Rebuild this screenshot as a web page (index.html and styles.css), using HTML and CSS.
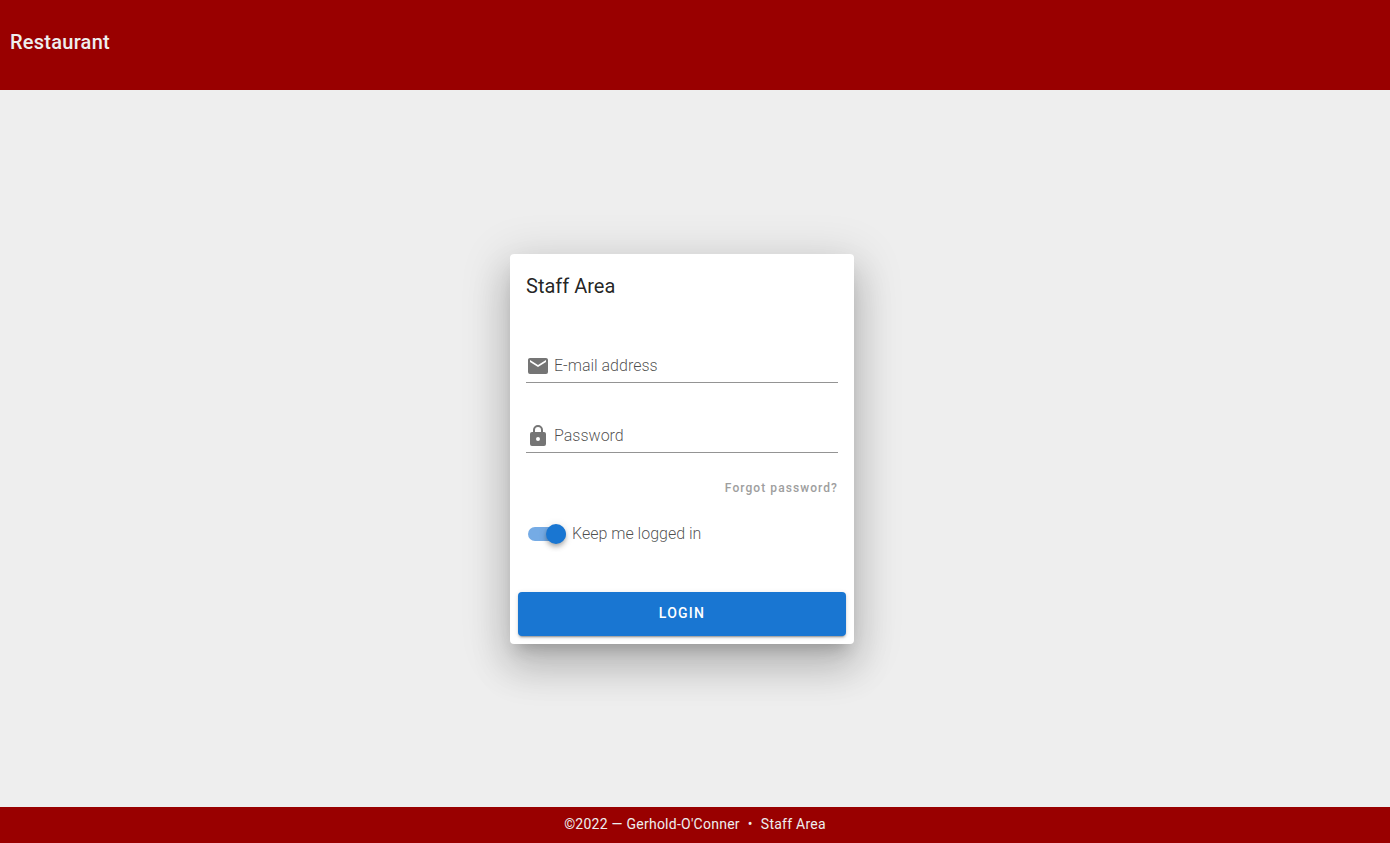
FILE: index.html
```html
<!DOCTYPE html>
<html lang="en">
<head>
  <meta charset="utf-8">
  <meta name="viewport" content="width=device-width, initial-scale=1">
  <title>Restaurant</title>
  <link rel="stylesheet" href="styles.css">
</head>
<body class="app">
  <header class="app-bar">
    <h1 class="brand">Restaurant</h1>
  </header>

  <main class="content">
    <form class="card">
      <h2 class="card-title">Staff Area</h2>

      <div class="card-body">
        <div class="field">
          <svg class="field-icon" viewBox="0 0 24 24" aria-hidden="true"><path d="M20 8l-8 5-8-5V6l8 5 8-5m0-2H4c-1.110 0-2 .890-2 2v12a2 2 0 0 0 2 2h16a2 2 0 0 0 2-2V6c0-1.110-.900-2-2-2z"/></svg>
          <div class="field-slot">
            <input class="field-input" id="email" type="email" placeholder=" ">
            <label class="field-label" for="email">E-mail address</label>
          </div>
        </div>

        <div class="field">
          <svg class="field-icon" viewBox="0 0 24 24" aria-hidden="true"><path d="M12 17a2 2 0 0 0 2-2 2 2 0 0 0-2-2 2 2 0 0 0-2 2 2 2 0 0 0 2 2m6-9a2 2 0 0 1 2 2v10a2 2 0 0 1-2 2H6a2 2 0 0 1-2-2V10a2 2 0 0 1 2-2h1V6a5 5 0 0 1 10 0v2h1m-6-5a3 3 0 0 0-3 3v2h6V6a3 3 0 0 0-3-3z"/></svg>
          <div class="field-slot">
            <input class="field-input" id="password" type="password" placeholder=" ">
            <label class="field-label" for="password">Password</label>
          </div>
        </div>

        <a class="forgot" href="#">Forgot password?</a>

        <label class="switch">
          <input class="switch-input" type="checkbox" role="switch" checked>
          <span>Keep me logged in</span>
        </label>
      </div>

      <button class="login" type="submit">Login</button>
    </form>
  </main>

  <footer class="footer">
    <span>©2022 — Gerhold-O'Conner</span>
    <span>•</span>
    <span>Staff Area</span>
  </footer>
</body>
</html>
```
FILE: styles.css
```css
* {
  box-sizing: border-box;
}

.app {
  display: flex;
  flex-direction: column;
  min-height: 100vh;
  margin: 0;
  background: #eee;
  color: rgba(0, 0, 0, 0.87);
  font: 400 16px/24px Roboto, sans-serif;
}

.app-bar {
  padding: 26px 10px 32px;
  background: #990000;
  color: #eee;
}

.brand {
  margin: 0;
  font-size: 20px;
  font-weight: 500;
  line-height: 32px;
  letter-spacing: 0.0125em;
}

.content {
  display: flex;
  flex: 1;
  align-items: center;
  justify-content: center;
  padding-right: 26px;
}

.card {
  width: 100%;
  max-width: 344px;
  border-radius: 4px;
  background: #fff;
  box-shadow: 0 11px 15px -7px rgba(0, 0, 0, 0.2), 0 24px 38px 3px rgba(0, 0, 0, 0.14), 0 9px 46px 8px rgba(0, 0, 0, 0.12);
}

.card-title {
  margin: 0;
  padding: 16px 16px 0;
  font-size: 20px;
  font-weight: 400;
  line-height: 32px;
}

.card-body {
  display: flex;
  flex-direction: column;
  padding: 48px 16px 0;
}

.field {
  display: flex;
  align-items: center;
  gap: 4px;
  height: 33px;
  margin-bottom: 37px;
  border-bottom: 1px solid #949494;
}

.field-icon {
  width: 24px;
  height: 24px;
  fill: #757575;
}

.field-slot {
  display: grid;
  flex: 1;
}

.field-input,
.field-label {
  grid-area: 1 / 1;
}

.field-input {
  width: 100%;
  height: 32px;
  padding: 0;
  border: 0;
  outline: 0;
  background: transparent;
  color: inherit;
  font: inherit;
}

.field-label {
  align-self: center;
  color: rgba(0, 0, 0, 0.7);
  font-weight: 300;
  pointer-events: none;
}

.field-input:focus + .field-label,
.field-input:not(:placeholder-shown) + .field-label {
  visibility: hidden;
}

.forgot {
  align-self: flex-end;
  margin-top: -10px;
  color: #9e9e9e;
  font-size: 12px;
  font-weight: 500;
  line-height: 16px;
  letter-spacing: 0.0892857143em;
  text-decoration: none;
}

.switch {
  display: flex;
  align-items: center;
  gap: 6px;
  margin-top: 26px;
  padding-left: 2px;
  color: rgba(0, 0, 0, 0.7);
  font-weight: 300;
}

.switch-input {
  display: flex;
  align-items: center;
  appearance: none;
  width: 38px;
  height: 14px;
  margin: 0;
  border-radius: 8px;
  background: #75abe5;
}

.switch-input::before {
  width: 20px;
  height: 20px;
  border-radius: 50%;
  background: #fff;
  box-shadow: 0 2px 4px -1px rgba(0, 0, 0, 0.2), 0 4px 5px 0 rgba(0, 0, 0, 0.14), 0 1px 10px 0 rgba(0, 0, 0, 0.12);
  content: "";
}

.switch-input:checked::before {
  margin-left: auto;
  background: #1976d2;
}

.switch-input:not(:checked) {
  background: #9e9e9e;
}

.login {
  display: block;
  width: calc(100% - 16px);
  height: 44px;
  margin: 46px 8px 8px;
  padding: 0 16px 2px;
  border: 0;
  border-radius: 4px;
  background: #1976d2;
  color: #fff;
  box-shadow: 0 3px 1px -2px rgba(0, 0, 0, 0.2), 0 2px 2px 0 rgba(0, 0, 0, 0.14), 0 1px 5px 0 rgba(0, 0, 0, 0.12);
  font: 500 14px/20px Roboto, sans-serif;
  letter-spacing: 0.0892857143em;
  text-transform: uppercase;
}

.footer {
  display: flex;
  justify-content: center;
  gap: 8px;
  padding: 6px 16px 8px;
  background: #990000;
  color: #eee;
  font-size: 14px;
  line-height: 22px;
  letter-spacing: 0.0178571429em;
}
```
